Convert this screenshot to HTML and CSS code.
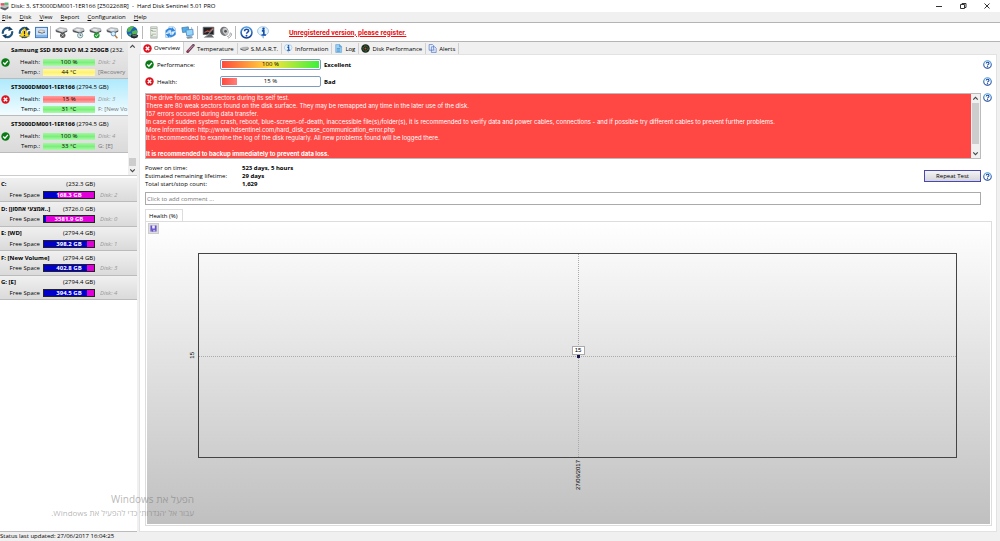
FILE: index.html
```html
<!DOCTYPE html>
<html lang="en">
  <head>
    <meta charset="UTF-8" />
    <meta name="viewport" content="width=device-width, initial-scale=1.0" />
    <title>Hard Disk Sentinel</title>
    <link rel="stylesheet" href="styles.css" />
  </head>
  <body>
    <svg class="sprite" aria-hidden="true">
      <defs>
        <linearGradient id="blueGrad" x1="0" y1="0" x2="0" y2="1">
          <stop offset="0" stop-color="#4fa0dc" />
          <stop offset="1" stop-color="#123a94" />
        </linearGradient>
      </defs>
      <symbol id="i-ok" viewBox="0 0 16 16">
        <circle cx="8" cy="8" r="7.5" fill="#0a7a14" />
        <path d="M4 8l3 3.2 5.2-6" fill="none" stroke="#fff" stroke-width="2.4" />
      </symbol>
      <symbol id="i-bad" viewBox="0 0 16 16">
        <circle cx="8" cy="8" r="7.5" fill="#dc1420" />
        <path d="M5 5l6 6M11 5l-6 6" stroke="#fff" stroke-width="2.6" />
      </symbol>
      <symbol id="i-help" viewBox="0 0 16 16">
        <circle cx="8" cy="8" r="6.7" fill="#fff" stroke="url(#blueGrad)" stroke-width="2" />
        <path d="M5.6 6.4c0-3.4 5-3.2 5-.4 0 1.6-2.5 1.8-2.5 3.6" fill="none" stroke="#1a49a8" stroke-width="1.9" />
        <circle cx="8" cy="11.9" r="1.2" fill="#1a49a8" />
      </symbol>
      <symbol id="i-refresh" viewBox="0 0 16 16">
        <path d="M2.4 9.5A5.8 5.8 0 0 1 11 3.2M13.6 6.5A5.8 5.8 0 0 1 5 12.8" fill="none" stroke="#23577f" stroke-width="2.7" />
        <path d="M10 .5l4.6 3.8-5.6 2zM6 15.5l-4.6-3.8 5.6-2z" fill="#173f66" />
      </symbol>
      <symbol id="i-warn" viewBox="0 0 16 16">
        <use href="#i-refresh" />
        <path d="M8 2.500l5.800 10.500H2.200z" fill="#ffd91a" stroke="#c99b00" stroke-width=".7" />
        <path d="M8 6v4M8 11v1.400" stroke="#222" stroke-width="1.500" />
      </symbol>
      <symbol id="i-drive" viewBox="0 0 16 16">
        <path d="M1 4.500L6 2l8 1 1 2.500-5 3-8-1z" fill="#c9cbcd" stroke="#85898d" stroke-width=".7" />
        <path d="M1 5v1.800l8 2.400V8zM15 5.500V7L9.500 9.200V8z" fill="#4d5256" />
        <ellipse cx="7.500" cy="4.700" rx="3" ry="1.100" fill="#eff0f0" />
      </symbol>
      <symbol id="i-smart" viewBox="0 -3 16 16">
        <path d="M0 5l5-2 9-.5 2 2-6 3.500H4z" fill="#b9bcbe" stroke="#85898d" stroke-width=".7" />
        <path d="M1 5.500l7 2.500 7-3v1.500L8.500 9 1 7z" fill="#55595c" />
      </symbol>
      <symbol id="i-panel" viewBox="0 0 16 16">
        <rect x=".7" y="1.700" width="14.600" height="12.600" fill="#cfe4fa" stroke="#3a70b4" stroke-width="1.200" />
        <rect x="1.300" y="10.800" width="13.400" height="3" fill="#84b6ea" />
        <use href="#i-drive" x="3" y="3.500" width="10" height="10" />
      </symbol>
      <symbol id="i-drive-x" viewBox="0 0 16 16">
        <use href="#i-drive" />
        <circle cx="9.500" cy="11.500" r="3.300" fill="#555" />
        <path d="M8 10l3 3M11 10l-3 3" stroke="#ccc" />
      </symbol>
      <symbol id="i-drive-clock" viewBox="0 0 16 16">
        <use href="#i-drive" />
        <circle cx="10" cy="11.500" r="3.200" fill="#d8eef0" stroke="#6e8b94" />
        <path d="M10 9.500v2.200h1.500" fill="none" stroke="#333" stroke-width=".8" />
      </symbol>
      <symbol id="i-drive-ok" viewBox="0 0 16 16">
        <use href="#i-drive" />
        <circle cx="9.500" cy="11.500" r="3.500" fill="#249832" />
        <path d="M7.800 11.500l1.300 1.400 2.200-2.800" fill="none" stroke="#fff" stroke-width="1.200" />
      </symbol>
      <symbol id="i-drive-find" viewBox="0 0 16 16">
        <use href="#i-drive" />
        <circle cx="9" cy="9.500" r="2.700" fill="#d9efff" stroke="#4d87b5" />
        <path d="M11 11.500l3 3.500" stroke="#ba7a3c" stroke-width="1.800" />
      </symbol>
      <symbol id="i-globe" viewBox="0 0 16 16">
        <circle cx="7.500" cy="7" r="6.700" fill="#1c62b6" />
        <path d="M2 3c3-3 7-3 8-2L7 4 5 7 1.500 7zM7 7l5-2 2 1-1 4-4 2zM3 10l3-1 1 4z" fill="#56b84a" />
        <path d="M6 11.500l4-1.500 5 1.200-1 3-4 1.300-4-1.500z" fill="#20262a" />
        <path d="M8 12h5" stroke="#9aa" />
      </symbol>
      <symbol id="i-server" viewBox="0 0 16 16">
        <path d="M4.500 1h8v14h-8z" fill="#edf1e8" stroke="#99a198" stroke-width=".8" />
        <path d="M5 3h7M6 6.500h5M6 10h5M5 13.500h7" stroke="#a0a8a1" />
        <path d="M5 5.500h2M5 11.500h2" stroke="#63a65c" />
      </symbol>
      <symbol id="i-copy" viewBox="0 0 16 16">
        <path d="M6 1h6l2 2v8H6zM2 5h7v9H2z" fill="#e0f0ff" stroke="#8dbbe8" stroke-width=".9" />
        <path d="M3 8c0-4 4-5.500 7.500-3.500M13.500 8c0 4-4 5.500-7.500 3.500" fill="none" stroke="#2f86dc" stroke-width="2.200" />
        <path d="M10 1.500l4 4.500-5.500 1zM6 14.500L2 10l5.500-1z" fill="#2f86dc" />
      </symbol>
      <symbol id="i-screens" viewBox="0 0 16 16">
        <path d="M1 2l8-1 1 6-8 1z" fill="#51aee7" stroke="#3c6e9c" stroke-width=".8" />
        <path d="M6 5l8.500-1 .5 7-8 1z" fill="#93d7fa" stroke="#4b83c4" />
        <path d="M7 13.500l6-1 1 2-6 .8zM13 1.500v2" fill="#7793ab" stroke="#88a2b3" />
      </symbol>
      <symbol id="i-monitor" viewBox="0 0 16 16">
        <path d="M1.500 1.500h13v9h-13z" fill="#202226" stroke="#60646a" />
        <path d="M2 14l5-3h5l3 3z" fill="#62666b" />
        <path d="M3 8l4-2 2 1 5-5" fill="none" stroke="#b8564a" stroke-width="1.500" />
        <path d="M5 13L14 3.500" stroke="#a7acb2" stroke-width="1.200" />
      </symbol>
      <symbol id="i-speaker" viewBox="0 0 16 16">
        <ellipse cx="6.500" cy="6.500" rx="5" ry="5.800" fill="#73767a" transform="rotate(-25 6.500 6.500)" />
        <ellipse cx="8" cy="6.500" rx="3.300" ry="4.500" fill="#c5c7c9" transform="rotate(-25 8 6.500)" />
        <circle cx="8" cy="6.500" r="1.700" fill="#555" />
        <path d="M10 13c2 0 4-2 4-5M11 15c3-1 4.500-3 4.500-6" fill="none" stroke="#8b8e91" />
      </symbol>
      <symbol id="i-info" viewBox="0 0 16 16">
        <path d="M8 1a6 5.300 0 0 1 0 10.800L8 15l-2.500-3.500A6 5.300 0 0 1 8 1z" fill="#e6f5ff" stroke="#8bbbe0" stroke-width="1" />
        <circle cx="8" cy="3.300" r="1.500" fill="#164da6" />
        <path d="M6 6h2.400v4.800M5.500 11h5.500" fill="none" stroke="#164da6" stroke-width="2" />
      </symbol>
      <symbol id="i-temp" viewBox="0 0 16 16">
        <path d="M3 13.500L13 2.500" stroke="#67455b" stroke-width="5" stroke-linecap="round" />
        <path d="M4 12l8.500-9.300" stroke="#e69ab8" stroke-width="1.700" />
        <circle cx="3.500" cy="13" r="2" fill="#ae2943" />
      </symbol>
      <symbol id="i-log" viewBox="0 0 16 16">
        <path d="M3 1h7l3.500 3.500V15H3z" fill="#9bd0f4" stroke="#5c9dce" />
        <path d="M10 1v4h3.500M5 8h6M5 10.500h6M5 13h6" fill="none" stroke="#317bb8" />
      </symbol>
      <symbol id="i-perf" viewBox="0 0 16 16">
        <circle cx="8" cy="8" r="7.500" fill="#1c261d" />
        <circle cx="8" cy="8" r="4.500" fill="none" stroke="#4f9d42" stroke-width="1.500" stroke-dasharray="3 1.500" />
        <circle cx="8" cy="8" r="1.800" fill="#b8493c" />
      </symbol>
      <symbol id="i-alerts" viewBox="0 0 16 16">
        <path d="M2 1h6l2 2v8H2zM6 5h6l2.500 2.500V15H6z" fill="#e7f2ff" stroke="#4565b8" stroke-width="1.100" />
        <path d="M8 9.500h4M8 12h4" stroke="#86a6dc" />
      </symbol>
      <symbol id="i-save" viewBox="0 0 16 16">
        <path d="M1 1h14v14H1z" fill="#6450c8" />
        <path d="M5 1h6v7H5z" fill="#eeeaff" />
        <path d="M4 11h8v4H4z" fill="#bbb0ec" />
        <path d="M6 11v4" stroke="#4636a4" stroke-width="2" />
      </symbol>
      <symbol id="i-app" viewBox="0 0 16 16">
        <path d="M1 6l5-4 9 1v7l-6 4-8-2z" fill="#bfc3c4" />
        <path d="M1 2h7v4H1z" fill="#e95261" />
        <path d="M8 1h7v4H8z" fill="#54bd70" />
        <path d="M1 9l8 2 6-3v3l-6 4-8-3z" fill="#5b6164" />
      </symbol>
      <symbol id="i-up" viewBox="0 0 8 8">
        <path d="M2 5l2-2 2 2" fill="none" stroke="#444" />
      </symbol>
      <symbol id="i-down" viewBox="0 0 8 8">
        <path d="M2 3l2 2 2-2" fill="none" stroke="#444" />
      </symbol>
    </svg>

    <header class="titlebar">
      <svg class="app-icon"><use href="#i-app" /></svg>
      <h1>Disk: 3, ST3000DM001-1ER166 [Z502268R] &nbsp;-&nbsp; Hard Disk Sentinel 5.01 PRO</h1>
      <div class="window-buttons">
        <button type="button" aria-label="Minimize"><svg viewBox="0 0 8 8"><path d="M1 4.500h6" /></svg></button>
        <button type="button" aria-label="Restore"><svg viewBox="0 0 8 8"><path d="M1.500 2.500h4v4h-4zM3 2.500v-1h4v4H5.500" /></svg></button>
        <button type="button" aria-label="Close"><svg viewBox="0 0 8 8"><path d="M1.500 1.500l5 5M6.500 1.500l-5 5" /></svg></button>
      </div>
    </header>

    <nav class="menu">
      <button type="button"><u>F</u>ile</button>
      <button type="button"><u>D</u>isk</button>
      <button type="button"><u>V</u>iew</button>
      <button type="button"><u>R</u>eport</button>
      <button type="button"><u>C</u>onfiguration</button>
      <button type="button"><u>H</u>elp</button>
    </nav>

    <div class="toolbar">
      <div class="tools">
        <button type="button" aria-label="Refresh"><svg><use href="#i-refresh" /></svg></button>
        <button type="button" aria-label="Refresh problems"><svg><use href="#i-warn" /></svg></button>
        <button type="button" aria-label="Disk panel"><svg><use href="#i-panel" /></svg></button>
      </div>
      <div class="tools">
        <button type="button" aria-label="Stop test"><svg><use href="#i-drive-x" /></svg></button>
        <button type="button" aria-label="Short self test"><svg><use href="#i-drive-clock" /></svg></button>
        <button type="button" aria-label="Extended self test"><svg><use href="#i-drive-ok" /></svg></button>
        <button type="button" aria-label="Surface test"><svg><use href="#i-drive-find" /></svg></button>
      </div>
      <div class="tools">
        <button type="button" aria-label="Online"><svg><use href="#i-globe" /></svg></button>
      </div>
      <div class="tools">
        <button type="button" aria-label="Report"><svg><use href="#i-server" /></svg></button>
        <button type="button" aria-label="Send report"><svg><use href="#i-copy" /></svg></button>
        <button type="button" aria-label="Network"><svg><use href="#i-screens" /></svg></button>
      </div>
      <div class="tools">
        <button type="button" aria-label="Power"><svg><use href="#i-monitor" /></svg></button>
        <button type="button" aria-label="Sound"><svg><use href="#i-speaker" /></svg></button>
      </div>
      <div class="tools">
        <button type="button" aria-label="Help"><svg><use href="#i-help" /></svg></button>
        <button type="button" aria-label="About"><svg><use href="#i-info" /></svg></button>
      </div>
      <a class="register" href="#register">Unregistered version, please register.</a>
    </div>

    <div class="workspace">
      <aside class="sidebar">
        <div class="disk-pane">
          <div class="disks">
            <div class="disk">
              <h2><b>Samsung SSD 850 EVO M.2 250GB</b> (232.</h2>
              <svg class="state"><use href="#i-ok" /></svg>
              <span class="label">Health:</span><span class="bar green">100 %</span><i>Disk: 2</i>
              <span class="label">Temp.:</span><span class="bar yellow">44 °C</span><span class="vol">[Recovery</span>
            </div>
            <div class="disk selected">
              <h2><b>ST3000DM001-1ER166</b> (2794.5 GB)</h2>
              <svg class="state"><use href="#i-bad" /></svg>
              <span class="label">Health:</span><span class="bar red">15 %</span><i>Disk: 3</i>
              <span class="label">Temp.:</span><span class="bar green">31 °C</span><span class="vol">F: [New Vo</span>
            </div>
            <div class="disk">
              <h2><b>ST3000DM001-1ER166</b> (2794.5 GB)</h2>
              <svg class="state"><use href="#i-ok" /></svg>
              <span class="label">Health:</span><span class="bar green">100 %</span><i>Disk: 4</i>
              <span class="label">Temp.:</span><span class="bar green">33 °C</span><span class="vol">G: [E]</span>
            </div>
          </div>
          <div class="scrollbar end">
            <svg><use href="#i-up" /></svg>
            <span class="thumb"></span>
            <svg><use href="#i-down" /></svg>
          </div>
        </div>

        <div class="volumes">
          <div class="volume">
            <b>C:</b><span class="size">(232.3 GB)</span>
            <span class="label">Free Space</span><span class="space" style="--used: 27%">168.3 GB</span><i>Disk: 2</i>
          </div>
          <div class="volume">
            <b>D: [<bdo dir="rtl">אמצעי אחסון</bdo>..]</b><span class="size">(3726.0 GB)</span>
            <span class="label">Free Space</span><span class="space" style="--used: 4%">3581.9 GB</span><i>Disk: 0</i>
          </div>
          <div class="volume">
            <b>E: [WD]</b><span class="size">(2794.4 GB)</span>
            <span class="label">Free Space</span><span class="space" style="--used: 86%">398.2 GB</span><i>Disk: 1</i>
          </div>
          <div class="volume">
            <b>F: [New Volume]</b><span class="size">(2794.4 GB)</span>
            <span class="label">Free Space</span><span class="space" style="--used: 86%">402.8 GB</span><i>Disk: 3</i>
          </div>
          <div class="volume">
            <b>G: [E]</b><span class="size">(2794.4 GB)</span>
            <span class="label">Free Space</span><span class="space" style="--used: 86%">394.5 GB</span><i>Disk: 4</i>
          </div>
        </div>
      </aside>

      <main class="content">
        <div class="tabs">
          <button type="button" class="active"><svg><use href="#i-bad" /></svg>Overview</button>
          <button type="button"><svg><use href="#i-temp" /></svg>Temperature</button>
          <button type="button"><svg><use href="#i-smart" /></svg>S.M.A.R.T.</button>
          <button type="button"><svg><use href="#i-info" /></svg>Information</button>
          <button type="button"><svg><use href="#i-log" /></svg>Log</button>
          <button type="button"><svg><use href="#i-perf" /></svg>Disk Performance</button>
          <button type="button"><svg><use href="#i-alerts" /></svg>Alerts</button>
        </div>

        <div class="overview">
          <div class="row rating">
            <svg class="state"><use href="#i-ok" /></svg>
            <span>Performance:</span>
            <span class="gauge"><span class="fill rainbow" style="width: 100%"></span><span class="value">100 %</span></span>
            <b>Excellent</b>
            <button type="button" class="help" aria-label="Performance help"><svg><use href="#i-help" /></svg></button>
          </div>
          <div class="row rating">
            <svg class="state"><use href="#i-bad" /></svg>
            <span>Health:</span>
            <span class="gauge"><span class="fill" style="width: 15%"></span><span class="value">15 %</span></span>
            <b>Bad</b>
            <button type="button" class="help" aria-label="Health help"><svg><use href="#i-help" /></svg></button>
          </div>

          <div class="row report">
            <div class="message">
              <div class="message-text">
                <p>The drive found 80 bad sectors during its self test.</p>
                <p>There are 80 weak sectors found on the disk surface. They may be remapped any time in the later use of the disk.</p>
                <p>157 errors occured during data transfer.</p>
                <p>In case of sudden system crash, reboot, blue-screen-of-death, inaccessible file(s)/folder(s), it is recommended to verify data and power cables, connections - and if possible try different cables to prevent further problems.</p>
                <p>More information: http://www.hdsentinel.com/hard_disk_case_communication_error.php</p>
                <p>It is recommended to examine the log of the disk regularly. All new problems found will be logged there.</p>
                <p>&nbsp;</p>
                <p><b>It is recommended to backup immediately to prevent data loss.</b></p>
              </div>
              <div class="scrollbar">
                <svg><use href="#i-up" /></svg>
                <span class="thumb"></span>
                <svg><use href="#i-down" /></svg>
              </div>
            </div>
            <button type="button" class="help" aria-label="Report help"><svg><use href="#i-help" /></svg></button>
          </div>

          <div class="row summary">
            <dl>
              <dt>Power on time:</dt><dd>523 days, 5 hours</dd>
              <dt>Estimated remaining lifetime:</dt><dd>29 days</dd>
              <dt>Total start/stop count:</dt><dd>1,629</dd>
            </dl>
            <button type="button" class="repeat">Repeat Test</button>
            <button type="button" class="help" aria-label="Test help"><svg><use href="#i-help" /></svg></button>
          </div>

          <input class="comment" type="text" placeholder="Click to add comment ..." aria-label="Comment" />

          <div class="chart-tabs"><button type="button">Health (%)</button></div>
          <div class="chart-frame">
            <div class="chart">
              <button type="button" class="save" aria-label="Save chart"><svg><use href="#i-save" /></svg></button>
              <span class="y-label">15</span>
              <div class="plot">
                <span class="point"></span>
                <span class="tip">15</span>
              </div>
              <span class="x-label">27/06/2017</span>
            </div>
          </div>
        </div>
      </main>

      <div class="watermark" dir="rtl" lang="he">
        <p class="big">הפעל את Windows</p>
        <p>עבור אל 'הגדרות' כדי להפעיל את Windows.</p>
      </div>
    </div>

    <footer class="status">Status last updated: 27/06/2017 16:04:25</footer>
  </body>
</html>
```

FILE: styles.css
```css
* {
  box-sizing: border-box;
}
body {
  margin: 0;
  min-height: 100vh;
  display: flex;
  flex-direction: column;
  background: #f0f0f0;
  color: #000;
  font: 6px/8px "Open Sans", "Noto Sans", sans-serif;
}
h1,
h2,
p,
dl,
dd {
  margin: 0;
  font: inherit;
}
button {
  margin: 0;
  padding: 0;
  border: none;
  background: none;
  color: inherit;
  font: inherit;
}
svg {
  display: block;
  flex: none;
}
.sprite {
  position: absolute;
  width: 0;
  height: 0;
}

/* window */
.titlebar {
  display: flex;
  align-items: center;
  height: 12px;
  background: #fff;
}
.app-icon {
  width: 9px;
  height: 9px;
  margin-right: 2px;
}
.window-buttons {
  display: flex;
  gap: 16px;
  margin-left: auto;
  padding-right: 9px;
}
.window-buttons svg {
  width: 8px;
  height: 8px;
  fill: none;
  stroke: #333;
  stroke-width: 1;
}
.menu {
  display: flex;
  gap: 8px;
  height: 11px;
  padding: 0 2px;
  border-bottom: 1px solid #b4b4b4;
}
.toolbar {
  display: flex;
  align-items: center;
  height: 19px;
  background: #fff;
  border-bottom: 1px solid #b4b4b4;
}
.tools {
  display: flex;
  gap: 4px;
  padding: 0 2px 0 1px;
  border-right: 1px solid #b8b8b8;
}
.tools + .tools {
  padding-left: 4px;
}
.tools:nth-child(n + 3) {
  padding-right: 3px;
}
.tools:nth-last-of-type(1) {
  border-right: none;
}
.tools svg {
  width: 13px;
  height: 13px;
}
.register {
  margin-left: 16px;
  padding-top: 1px;
  color: #e81010;
  font-family: Roboto, sans-serif;
  font-size: 7px;
  font-weight: bold;
}
.workspace {
  position: relative;
  display: flex;
  flex: 1;
}
.status {
  height: 9px;
}

/* left side */
.sidebar {
  flex: none;
  width: 137px;
  background: #fff;
  border-bottom: 1px solid #bbb;
}
.disk-pane {
  display: flex;
  height: 134px;
  border-bottom: 1px solid #ccc;
}
.disks {
  flex: 1;
  min-width: 0;
}
.disk {
  display: grid;
  grid-template-columns: 8px 29px 52px 1fr;
  grid-template-rows: 15px 10px 10px;
  column-gap: 3px;
  align-items: center;
  height: 37px;
  white-space: nowrap;
  background: linear-gradient(#ececec, #dadada);
  border-bottom: 1px solid #bbb;
}
.disk.selected {
  background: linear-gradient(#aeeafc, #f2fcff);
}
.disk h2 {
  grid-column: 1 / -1;
  padding-left: 11px;
}
.state {
  width: 9px;
  height: 9px;
}
.disk .state {
  grid-row: 2;
  margin-left: 1px;
}
.disk .label {
  grid-column: 2;
  text-align: right;
}
.bar {
  height: 7px;
  line-height: 7px;
  text-align: center;
}
.green {
  background: linear-gradient(#a4f7a0, #7af07a 50%, #b0f8ac);
}
.yellow {
  background: linear-gradient(#fffa9a, #fff272 50%, #fffab0);
}
.red {
  background: linear-gradient(#ffa0a0, #ff7474 50%, #ffb0b0);
}
i {
  color: #999;
}
.vol {
  color: #777;
}
.scrollbar {
  display: flex;
  flex-direction: column;
  align-items: center;
  justify-content: space-between;
  flex: none;
  width: 9px;
  background: #f0f0f0;
}
.scrollbar svg {
  width: 9px;
  height: 9px;
}
.thumb {
  width: 7px;
  height: 41px;
  background: #cdcdcd;
}
.message .thumb {
  margin-bottom: 5px;
}
.scrollbar.end .thumb {
  height: 8px;
  margin-top: auto;
}
.volumes {
  display: grid;
  grid-auto-rows: 1fr;
  height: 124px;
  padding-top: 2px;
}
.volume {
  display: grid;
  grid-template-columns: 40px 52px 1fr;
  column-gap: 3px;
  align-content: space-evenly;
  align-items: center;
  white-space: nowrap;
  background: linear-gradient(#f0f0f0, #dadada);
  border-bottom: 1px solid #bbb;
}
.volume b {
  grid-column: 1;
  padding-left: 1px;
}
.volume .size {
  grid-column: 2;
  text-align: right;
}
.volume .label {
  grid-column: 1;
  text-align: right;
}
.volume i {
  padding-left: 2px;
}
.space {
  height: 8px;
  line-height: 6px;
  border: 1px solid #222;
  color: #fff;
  font-weight: bold;
  text-align: center;
  background: linear-gradient(to right, #0000c8 var(--used), #e000d8 var(--used));
}

/* right side */
.content {
  display: flex;
  flex-direction: column;
  flex: 1;
  min-width: 0;
  padding: 0 3px 0 2px;
}
.tabs {
  display: flex;
  align-items: flex-end;
  height: 12px;
  padding-left: 2px;
}
.tabs button {
  display: flex;
  align-items: center;
  gap: 2px;
  height: 11px;
  padding: 0 3px 0 2px;
  border-right: 1px solid #d0d0d0;
}
.tabs .active {
  height: 12px;
  background: #fff;
}
.tabs svg {
  width: 9px;
  height: 9px;
}
.overview {
  display: flex;
  flex-direction: column;
  flex: 1;
  padding: 1px 4px 5px 5px;
  background: #fff;
  border: 1px solid #e2e2e2;
}
.row {
  display: flex;
  gap: 2px;
}
.rating {
  align-items: center;
  height: 17px;
}
.rating span:nth-of-type(1) {
  width: 61px;
}
.rating b {
  margin-left: 1px;
}
.rating .state {
  margin-right: 1px;
}
.gauge {
  position: relative;
  width: 101px;
  height: 11px;
  padding: 1px;
  border: 1px solid #7d9cc0;
  border-radius: 2px;
  background: #fff;
}
.fill {
  display: block;
  height: 7px;
  background: linear-gradient(to right, #ff4a40, #ff8078);
}
.rainbow {
  background: linear-gradient(to right, #ff4a3c, #ffe23c 50%, #3cf03c);
}
.value {
  position: absolute;
  inset: 0;
  line-height: 9px;
  text-align: center;
}
.help {
  margin-left: auto;
}
.help svg {
  width: 9px;
  height: 9px;
}
.report {
  margin-top: 3px;
  align-items: flex-start;
}
.message {
  display: flex;
  flex: 1;
  min-width: 0;
  border: 1px solid #bbb;
  background: #ff4743;
}
.message-text {
  flex: 1;
  min-width: 0;
  color: #fff;
  font: 6px/8px Inter, "Liberation Sans", sans-serif;
}
.summary {
  align-items: center;
  padding: 5px 0 4px;
}
.summary dl {
  display: grid;
  grid-template-columns: 95px auto;
  column-gap: 2px;
}
.summary dd {
  font-weight: bold;
}
.repeat {
  width: 57px;
  height: 12px;
  margin-left: auto;
  border: 1px solid #4848b0;
  background: linear-gradient(#f4f4f4, #d4d4dc);
}
.summary .help {
  margin-left: 0;
}
.comment {
  width: calc(100% - 11px);
  height: 13px;
  padding: 0 1px;
  border: 1px solid #aaa;
  background: #fff;
  font: inherit;
}
.comment::placeholder {
  color: #777;
}
.chart-tabs {
  height: 12px;
  margin-top: 4px;
}
.chart-tabs button {
  height: 12px;
  padding: 0 4px 0 3px;
  border: 1px solid #ddd;
  border-bottom: none;
}
.chart-frame {
  display: flex;
  flex: 1;
  padding: 0 1px 1px;
  border: 1px solid #ddd;
}
.chart {
  display: grid;
  grid-template-columns: 51px 1fr 33px;
  grid-template-rows: 31px 1fr 66px;
  flex: 1;
  background: linear-gradient(#fff, #c0c0c0);
}
.save {
  align-self: start;
  width: 11px;
  height: 11px;
  margin: 1px;
  padding: 1px;
  border: 1px solid #ccc;
  background: #ddd;
}
.save svg {
  width: 7px;
  height: 7px;
}
.y-label,
.x-label {
  font-family: "Liberation Sans", Arial, sans-serif;
  writing-mode: vertical-rl;
  transform: rotate(180deg);
}
.y-label {
  grid-area: 2 / 1;
  place-self: center end;
  margin-right: 2px;
}
.x-label {
  grid-area: 3 / 2;
  place-self: start center;
  margin-top: 2px;
}
.plot {
  grid-area: 2 / 2;
  position: relative;
  border: 1px solid #444;
}
.plot::before,
.plot::after {
  content: "";
  position: absolute;
}
.plot::before {
  left: 0;
  right: 0;
  top: 50%;
  border-top: 1px dotted #aaa;
}
.plot::after {
  top: 0;
  bottom: 0;
  left: 50%;
  border-left: 1px dotted #aaa;
}
.point,
.tip {
  position: absolute;
  left: 50%;
  top: 50%;
  z-index: 1;
}
.point {
  width: 3px;
  height: 3px;
  margin: -1px;
  background: #16164e;
}
.tip {
  width: 13px;
  margin: -10px -6px;
  border: 1px solid #aaa;
  background: #fff;
  font-family: "Liberation Sans", Arial, sans-serif;
  line-height: 7px;
  text-align: center;
}
.watermark {
  position: absolute;
  left: 39px;
  bottom: 13px;
  width: 155px;
  color: rgba(110, 110, 110, 0.5);
  font-size: 8px;
  line-height: 13px;
}
.watermark .big {
  font-size: 10px;
}
```
